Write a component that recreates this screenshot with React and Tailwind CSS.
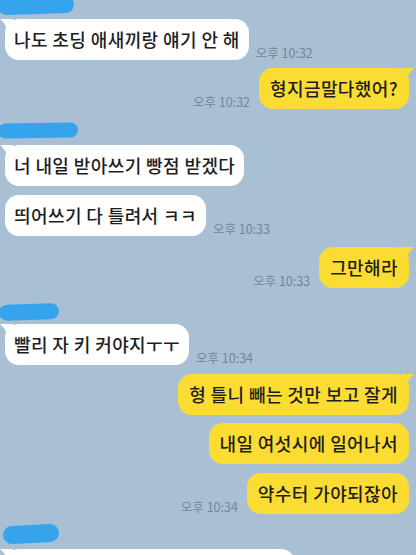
const ko = "font-['Noto_Sans_CJK_KR','Noto_Sans',sans-serif]";

function Tail({ side, color }) {
  if (side === 'left') {
    return (
      <svg className="absolute -left-[6px] top-0" width="14" height="12" viewBox="0 0 14 12">
        <path d="M14 0 L1 0 Q6 4 9 12 L14 12 Z" fill={color} />
      </svg>
    );
  }
  return (
    <svg className="absolute -right-[6px] top-0" width="14" height="12" viewBox="0 0 14 12">
      <path d="M0 0 L13 0 Q8 4 5 12 L0 12 Z" fill={color} />
    </svg>
  );
}

function Time({ children }) {
  return (
    <span className="mb-[1px] text-[12.5px] leading-none text-[#71869a] whitespace-nowrap">{children}</span>
  );
}

function Left({ text, time, tail, mt }) {
  return (
    <div className={`flex items-end gap-[7px] pl-[5px] ${mt}`}>
      <div className="relative h-[41px] flex items-center px-[9px] rounded-[14px] bg-white text-[18px] font-medium tracking-[0.4px] text-[#1e1e1e] whitespace-nowrap">
        {tail && <Tail side="left" color="#ffffff" />}
        <span className="relative">{text}</span>
      </div>
      {time && <Time>{time}</Time>}
    </div>
  );
}

function Right({ text, time, tail, mt }) {
  return (
    <div className={`flex items-end justify-end gap-[9px] pr-[7px] ${mt}`}>
      {time && <Time>{time}</Time>}
      <div className="relative h-[41px] flex items-center px-[11px] rounded-[14px] bg-[#fbdc33] text-[18px] font-medium tracking-[0.4px] text-[#1e1e1e] whitespace-nowrap">
        {tail && <Tail side="right" color="#fbdc33" />}
        <span className="relative">{text}</span>
      </div>
    </div>
  );
}

function Scribble({ h, w, mt, className }) {
  return (
    <div className={`${h} ${mt} overflow-visible`}>
      <div className={`${w} rounded-full bg-[#35a4ec] ${className}`} />
    </div>
  );
}

export default function App() {
  return (
    <div className={`w-[416px] h-[555px] overflow-hidden bg-[#a9bfd4] ${ko}`}>
      <Scribble h="h-[22px]" w="w-[76px]" mt="mt-0" className="h-[17px] -mt-[3px] -ml-[2px] -rotate-2" />
      <Left text="나도 초딩 애새끼랑 얘기 안 해" time="오후 10:32" tail mt="mt-0" />
      <Right text="형지금말다했어?" time="오후 10:32" tail mt="mt-[8px]" />

      <Scribble h="h-[15px]" w="w-[80px]" mt="mt-[14px]" className="h-[15px] -ml-[2px] -rotate-1" />
      <Left text="너 내일 받아쓰기 빵점 받겠다" tail mt="mt-[7px]" />
      <Left text="띄어쓰기 다 틀려서 ㅋㅋ" time="오후 10:33" mt="mt-[9px]" />
      <Right text="그만해라" time="오후 10:33" tail mt="mt-[11px]" />

      <Scribble h="h-[16px]" w="w-[60px]" mt="mt-[16px]" className="h-[16px] -ml-[1px] -rotate-2" />
      <Left text="빨리 자 키 커야지ㅜㅜ" time="오후 10:34" tail mt="mt-[4px]" />
      <Right text="형 틀니 빼는 것만 보고 잘게" tail mt="mt-[9px]" />
      <Right text="내일 여섯시에 일어나서" mt="mt-[8px]" />
      <Right text="약수터 가야되잖아" time="오후 10:34" mt="mt-[9px]" />

      <Scribble h="h-[19px]" w="w-[56px]" mt="mt-[11px]" className="h-[18px] ml-[3px] -rotate-3" />
      <div className="pl-[5px] mt-[5px]">
        <div className="relative w-[290px] h-[41px] rounded-[14px] bg-white">
          <Tail side="left" color="#ffffff" />
        </div>
      </div>
    </div>
  );
}
